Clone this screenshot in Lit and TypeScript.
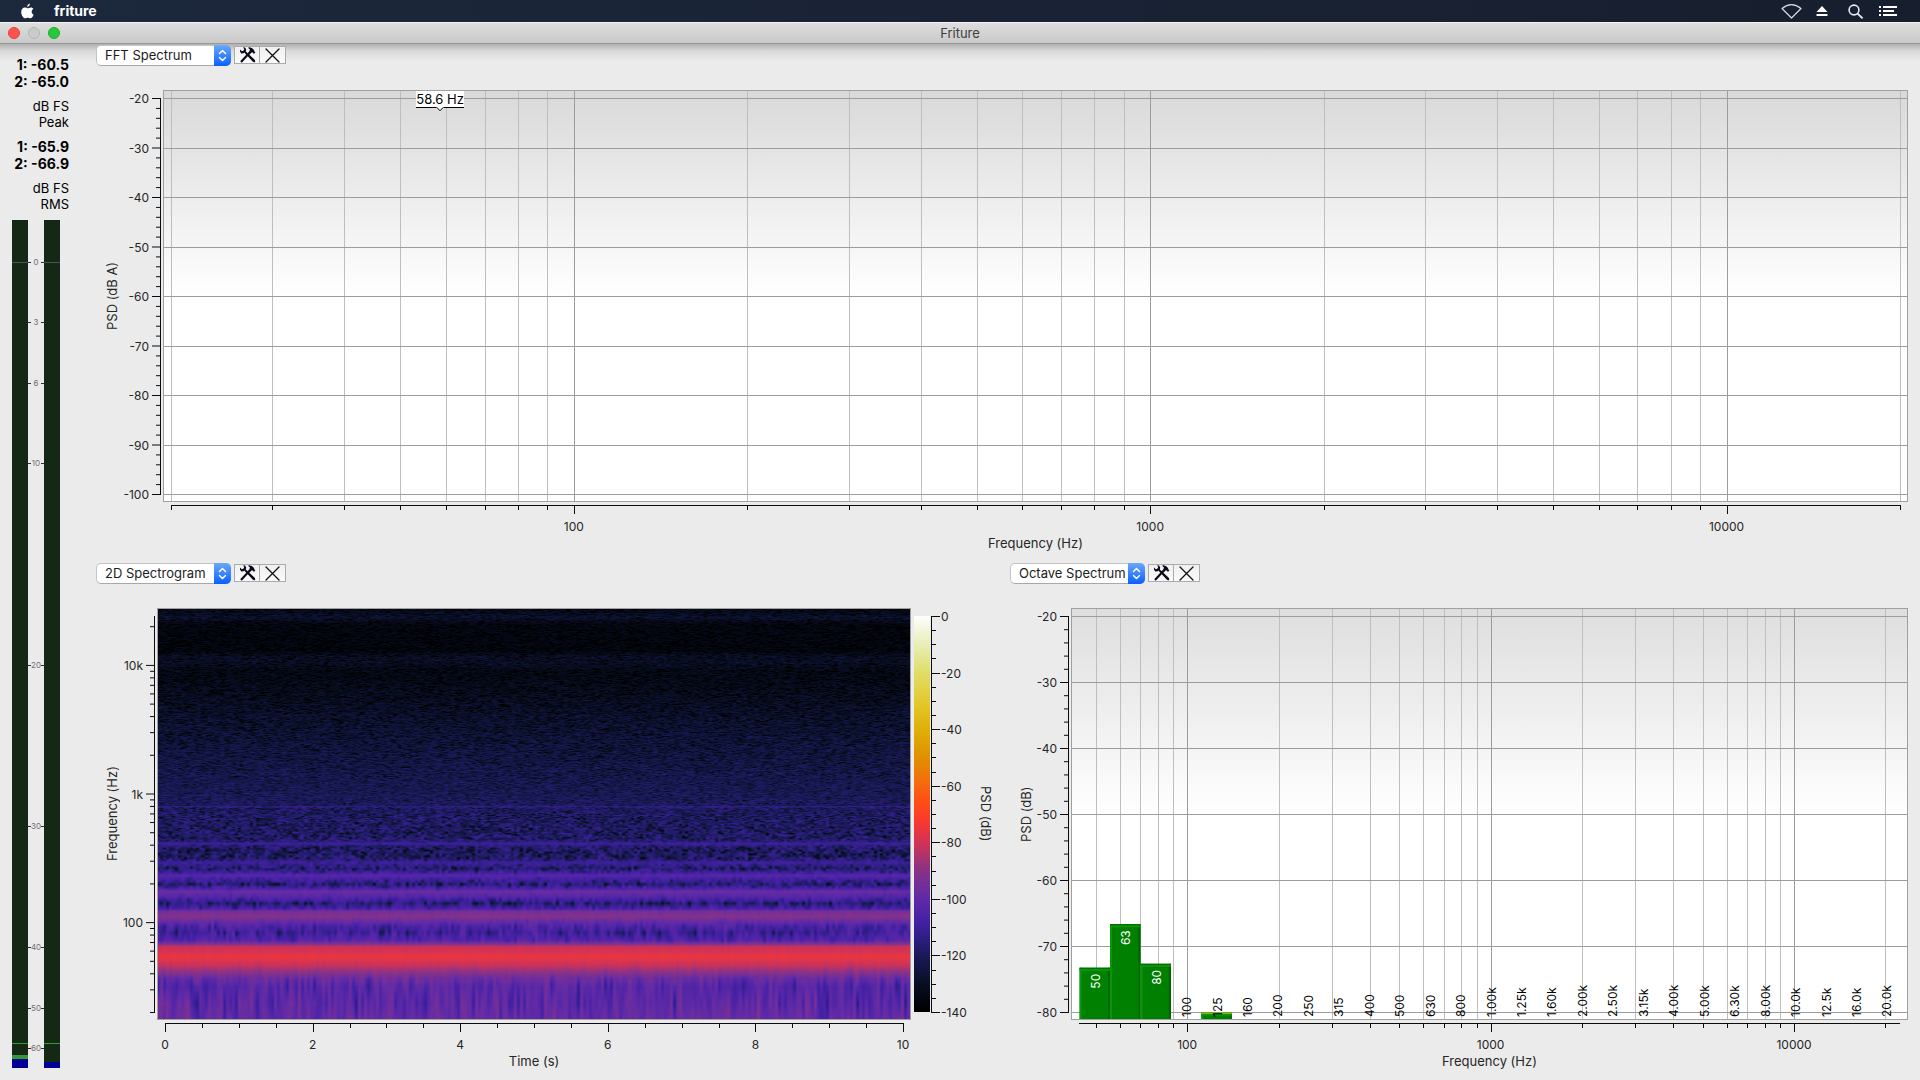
import { LitElement, html, svg, css, nothing } from "lit";
import { customElement, property } from "lit/decorators.js";

/* ---------- scales ---------- */

interface Tick {
  /** position along the axis, 0..1 */
  at: number;
  major: boolean;
  label?: string;
}

const pct = (v: number) => `${(v * 100).toFixed(3)}%`;

function logPos(f: number, lo: number, hi: number) {
  return Math.log10(f / lo) / Math.log10(hi / lo);
}

function logTicks(lo: number, hi: number, name: (f: number) => string): Tick[] {
  const out: Tick[] = [];
  for (let d = 10; d <= hi; d *= 10) {
    for (let m = 1; m < 10; m++) {
      const f = d * m;
      if (f < lo || f > hi) continue;
      out.push({
        at: logPos(f, lo, hi),
        major: m === 1,
        label: m === 1 ? name(f) : undefined,
      });
    }
  }
  return out;
}

function linearTicks(from: number, to: number, step: number, every: number): Tick[] {
  const n = Math.round(Math.abs(to - from) / step);
  const dir = Math.sign(to - from);
  return Array.from({ length: n + 1 }, (_, i) => {
    const major = i % every === 0;
    return {
      at: i / n,
      major,
      label: major ? String(from + dir * i * step) : undefined,
    };
  });
}

const flip = (ticks: Tick[]) => ticks.map((t) => ({ ...t, at: 1 - t.at }));

/* ---------- colour map of the spectrogram ---------- */

const COLOUR_STOPS: [number, [number, number, number]][] = [
  [0, [254, 254, 254]],
  [-10, [233, 238, 184]],
  [-20, [225, 221, 104]],
  [-30, [227, 202, 48]],
  [-40, [222, 176, 8]],
  [-50, [224, 144, 0]],
  [-58, [242, 112, 12]],
  [-65, [255, 80, 20]],
  [-72, [252, 58, 46]],
  [-80, [212, 50, 84]],
  [-90, [136, 50, 136]],
  [-100, [96, 42, 166]],
  [-108, [68, 32, 164]],
  [-114, [46, 30, 130]],
  [-120, [26, 26, 88]],
  [-130, [8, 14, 34]],
  [-140, [0, 0, 0]],
];

function colourOf(db: number): [number, number, number] {
  const v = Math.max(-139.99, Math.min(0, db));
  for (let i = 1; i < COLOUR_STOPS.length; i++) {
    const [b, cb] = COLOUR_STOPS[i];
    if (v >= b) {
      const [a, ca] = COLOUR_STOPS[i - 1];
      const k = (a - v) / (a - b);
      return [0, 1, 2].map((c) => ca[c] + (cb[c] - ca[c]) * k) as [number, number, number];
    }
  }
  return [0, 0, 0];
}

const COLOUR_BAR = `linear-gradient(${COLOUR_STOPS.map(
  ([v, c]) => `rgb(${c.join(",")}) ${((-v / 140) * 100).toFixed(1)}%`
).join(",")})`;

/** Row of the image, mean level in dB, share of noise. */
const LEVELS: [number, number, number][] = [
  [0, -134, 0.7], [8, -129, 0.7], [15, -136, 0.6], [41, -137, 0.6], [47, -131, 0.7],
  [54, -131, 0.7], [62, -135, 0.7], [90, -132, 0.8], [111, -129, 0.8], [150, -125, 0.8],
  [180, -122, 0.8], [196, -120, 0.8], [197, -114, 0.4], [199, -120, 1], [216, -120, 1.2],
  [229, -120, 1.2], [232, -116, 0.7], [234, -110, 0.2], [237, -117, 0.9], [241, -120, 1.2],
  [249, -119, 1.2], [253, -110, 0.3], [259, -118, 1.2], [263, -110, 0.6], [266, -103, 0.15],
  [270, -109, 0.6], [275, -117, 1.2], [279, -107, 0.5], [282, -98, 0.15], [287, -103, 0.3],
  [294, -116, 1.1], [299, -108, 0.6], [302, -95, 0.15], [307, -91, 0.15], [311, -97, 0.25],
  [317, -106, 0.7], [323, -110, 1], [331, -104, 0.6], [335, -90, 0.15], [337, -82, 0.1],
  [348, -76, 0.06], [356, -82, 0.1], [363, -90, 0.25], [369, -98, 0.6], [377, -103, 1],
  [391, -102, 1], [410, -99, 1],
];

function levelAt(row: number): [number, number] {
  for (let i = 1; i < LEVELS.length; i++) {
    if (row <= LEVELS[i][0]) {
      const [r0, a0, n0] = LEVELS[i - 1];
      const [r1, a1, n1] = LEVELS[i];
      const k = (row - r0) / (r1 - r0);
      return [a0 + (a1 - a0) * k, n0 + (n1 - n0) * k];
    }
  }
  return [-99, 1];
}

/** Level of one noise cell around 0 dB, with the long lower tail of a noise power. */
function noiseCell(a: number, b: number) {
  let h = Math.imul(a + 374761, 668265263) ^ Math.imul(b + 91138, 2246822519);
  h = Math.imul(h ^ (h >>> 13), 1274126177);
  h = Math.imul(h ^ (h >>> 15), 2654435761);
  const u = ((h ^ (h >>> 16)) >>> 0) / 4294967296;
  return Math.max(-14, 10 * Math.log10(-Math.log(1 - u * 0.9999) + 1e-6) + 2.5);
}

/* ---------- shared text style ---------- */

const base = css`
  :host {
    font-family: Inter, "Liberation Sans", sans-serif;
    font-size: 13px;
    line-height: 16px;
    color: #262626;
  }
  * {
    box-sizing: border-box;
  }
  svg {
    display: block;
    overflow: visible;
  }
  text {
    font-family: Inter, "Liberation Sans", sans-serif;
    font-size: 12px;
    fill: #262626;
  }
`;

/* ---------- spectrogram image ---------- */

@customElement("spectrogram-image")
class SpectrogramImage extends LitElement {
  static styles = css`
    :host {
      display: block;
      height: 100%;
    }
    canvas {
      display: block;
      width: 100%;
      height: 100%;
    }
  `;

  firstUpdated() {
    const canvas = this.renderRoot.querySelector("canvas")!;
    const ctx = canvas.getContext("2d")!;
    const { width, height } = canvas;
    const image = ctx.createImageData(width, height);
    const binWidth = 48000 / 4096;
    const cell = 3;
    for (let y = 0; y < height; y++) {
      const f = 20 * Math.pow(1200, (height - 7 - y) / (height - 14));
      const bin = f / binWidth;
      const dense = y < 170;
      const b0 = dense ? 5000 + y : Math.floor(bin);
      const kb = dense ? 0 : bin - Math.floor(bin);
      const [mean, share] = levelAt(y);
      for (let x = 0; x < width; x++) {
        const t = x / cell + (dense ? (y * 0.37) % 1 : 0);
        const t0 = Math.floor(t);
        const kt = t - t0;
        const low = noiseCell(b0, t0) * (1 - kt) + noiseCell(b0, t0 + 1) * kt;
        const high = kb ? noiseCell(b0 + 1, t0) * (1 - kt) + noiseCell(b0 + 1, t0 + 1) * kt : low;
        const noise = low * (1 - kb) + high * kb;
        const [r, g, b] = colourOf(mean + noise * share);
        const i = (y * width + x) * 4;
        image.data[i] = r;
        image.data[i + 1] = g;
        image.data[i + 2] = b;
        image.data[i + 3] = 255;
      }
    }
    ctx.putImageData(image, 0, 0);
  }

  render() {
    return html`<canvas width="752" height="410" role="img" aria-label="2D Spectrogram"></canvas>`;
  }
}

/* ---------- plot with axes ---------- */

@customElement("axis-plot")
class AxisPlot extends LitElement {
  @property() xTitle = "";
  @property() yTitle = "";
  @property({ attribute: false }) xTicks: Tick[] = [];
  @property({ attribute: false }) yTicks: Tick[] = [];
  @property({ type: Boolean }) grid = false;
  @property({ type: Boolean }) wide = false;

  static styles = [
    base,
    css`
      :host {
        display: grid;
        grid-template-columns: 40px 25px minmax(0, 1fr) auto;
        grid-template-rows: minmax(0, 1fr) 33px 27px;
      }
      :host([wide]) {
        grid-template-columns: 40px 31px minmax(0, 1fr) auto;
      }
      .y-title {
        display: grid;
        place-items: center;
        writing-mode: vertical-rl;
        transform: rotate(180deg);
      }
      .y-axis {
        padding: 8px 0;
      }
      .y-axis svg,
      .x-axis svg {
        width: 100%;
        height: 100%;
      }
      .field {
        position: relative;
        overflow: hidden;
        border: 1px solid #a0a0a0;
        background: var(--field, none);
      }
      .layer {
        position: absolute;
        inset: 0;
      }
      .rows {
        inset: 7px 0;
      }
      .columns {
        inset: 0 7px;
      }
      .layer svg {
        width: 100%;
        height: 100%;
      }
      .x-axis {
        grid-column: 3;
        grid-row: 2;
        padding: 0 8px;
      }
      .x-title {
        grid-column: 3;
        grid-row: 3;
        text-align: center;
      }
      .side {
        grid-column: 4;
        grid-row: 1;
        display: flex;
      }
      .line {
        fill: #0c0c0c;
      }
      .minor {
        fill: #bebebe;
      }
      .major {
        fill: #9c9c9c;
      }
    `,
  ];

  render() {
    return html`
      <div class="y-title">${this.yTitle}</div>
      <div class="y-axis">
        <svg>
          <svg x="100%" overflow="visible"><rect class="line" x="-3" width="1" height="100%" /></svg>
          ${this.yTicks.map(
            (t) => svg`<svg x="100%" y=${pct(t.at)} overflow="visible">
              <rect class="line" x=${t.major ? -11 : -7} width=${t.major ? 9 : 5} height="1" />
              ${t.label ? svg`<text x="-14" y="5" text-anchor="end">${t.label}</text>` : nothing}
            </svg>`
          )}
        </svg>
      </div>
      <div class="field">
        ${this.grid
          ? html`<div class="layer columns">
                <svg shape-rendering="crispEdges">
                  ${this.xTicks.map(
                    (t) => svg`<rect class=${t.major ? "major" : "minor"} x=${pct(t.at)} width="1" height="100%" />`
                  )}
                </svg>
              </div>
              <div class="layer rows">
                <svg shape-rendering="crispEdges">
                  ${this.yTicks
                    .filter((t) => t.major)
                    .map((t) => svg`<rect class="major" y=${pct(t.at)} width="100%" height="1" />`)}
                </svg>
              </div>`
          : nothing}
        <slot></slot>
      </div>
      <div class="side"><slot name="side"></slot></div>
      <div class="x-axis">
        <svg>
          <rect class="line" y="3" width="100%" height="1" />
          ${this.xTicks.map(
            (t) => svg`<svg x=${pct(t.at)} overflow="visible">
              <rect class="line" y="3" width="1" height=${t.major ? 9 : 5} shape-rendering="crispEdges" />
              ${t.label ? svg`<text y="29" text-anchor="middle">${t.label}</text>` : nothing}
            </svg>`
          )}
        </svg>
      </div>
      <div class="x-title">${this.xTitle}</div>
    `;
  }
}

/* ---------- colour scale ---------- */

@customElement("colour-scale")
class ColourScale extends LitElement {
  static styles = [
    base,
    css`
      :host {
        display: flex;
        padding: 8px 10px 8px 3px;
      }
      .bar {
        width: 16px;
      }
      .scale {
        width: 46px;
      }
      .scale svg {
        width: 100%;
        height: 100%;
      }
      .title {
        width: 20px;
        display: grid;
        place-items: center;
        writing-mode: vertical-rl;
      }
      .line {
        fill: #0c0c0c;
      }
    `,
  ];

  render() {
    return html`
      <div class="bar" style="background:${COLOUR_BAR}"></div>
      <div class="scale">
        <svg>
          <rect class="line" x="1" width="1" height="100%" />
          ${linearTicks(0, -140, 5, 4).map(
            (t) => svg`<svg y=${pct(t.at)} overflow="visible">
              <rect class="line" x="1" width=${t.major ? 9 : 5} height="1" shape-rendering="crispEdges" />
              ${t.label ? svg`<text x="11" y="5">${t.label}</text>` : nothing}
            </svg>`
          )}
        </svg>
      </div>
      <div class="title">PSD (dB)</div>
    `;
  }
}

/* ---------- octave bars ---------- */

const OCT_LO = 44;
const OCT_HI = 22350;
const BANDS = [
  "50", "63", "80", "100", "125", "160", "200", "250", "315", "400", "500", "630", "800", "1.00k",
  "1.25k", "1.60k", "2.00k", "2.50k", "3.15k", "4.00k", "5.00k", "6.30k", "8.00k", "10.0k", "12.5k",
  "16.0k", "20.0k",
];
const BAND_LEVELS: Record<string, number> = { "50": -73.3, "63": -66.7, "80": -72.7, "125": -80.1 };

@customElement("octave-bars")
class OctaveBars extends LitElement {
  static styles = [
    base,
    css`
      :host {
        position: absolute;
        inset: 7px;
      }
      .plot {
        width: 100%;
        height: 100%;
      }
      .name {
        fill: #000;
      }
      .inside {
        fill: #fff;
      }
      .face {
        fill: #008000;
      }
      .light {
        fill: #0a960a;
      }
      .dark {
        fill: #006400;
      }
      .hold {
        fill: #c8c800;
      }
    `,
  ];

  render() {
    const span = Math.log10(OCT_HI / OCT_LO);
    const width = Math.log10(2) / 3 / span;
    return html`<svg class="plot">
      ${BANDS.map((name, i) => {
        const centre = logPos(1000 * Math.pow(2, (i - 13) / 3), OCT_LO, OCT_HI);
        const level = BAND_LEVELS[name];
        const top = level === undefined ? 1 : (-20 - level) / 60;
        const tall = level !== undefined && level > -79;
        return svg`
          ${level === undefined
            ? nothing
            : svg`<svg x=${pct(centre - width / 2)} y=${pct(top)} width=${pct(width)} height="100%" overflow="hidden">
                <rect class="face" width="100%" height="100%" />
                <rect class="light" width="2" height="100%" />
                <svg x="100%" overflow="visible"><rect class="dark" x="-2" width="2" height="100%" /></svg>
                <rect class="light" width="100%" height="3" />
                <rect class=${tall ? "dark" : "hold"} width="100%" height="1" />
              </svg>`}
          <svg x=${pct(centre)} y=${tall ? pct(top) : "100%"} overflow="visible">
            <text class=${tall ? "inside" : "name"} transform="rotate(-90)"
              x=${tall ? -6 : -5} y="5" text-anchor=${tall ? "end" : "start"}>${name}</text>
          </svg>`;
      })}
    </svg>`;
  }
}

/* ---------- dock: toolbar over a plot ---------- */

const KINDS = ["FFT Spectrum", "2D Spectrogram", "Octave Spectrum"];

@customElement("plot-dock")
class PlotDock extends LitElement {
  @property() kind = "";

  static styles = [
    base,
    css`
      :host {
        display: flex;
        flex-direction: column;
        min-width: 0;
      }
      .toolbar {
        display: flex;
        align-items: flex-start;
        gap: 3px;
        height: 46px;
        padding: 1px 4px;
      }
      .picker {
        position: relative;
        display: flex;
        width: 135px;
        height: 21px;
      }
      select {
        appearance: none;
        width: 100%;
        padding: 0 0 2px 8px;
        border: 1px solid #c4c4c4;
        border-bottom-color: #a8a8a8;
        border-radius: 5px;
        background: #fff;
        color: #1c1c1c;
        font: inherit;
      }
      .chevrons {
        position: absolute;
        inset: 0 0 0 auto;
        width: 17px;
        border-radius: 0 5px 5px 0;
        background: linear-gradient(#6aa8fa, #0a60fe);
        pointer-events: none;
      }
      .tools {
        display: flex;
        padding-top: 1px;
      }
      button {
        display: grid;
        place-items: center;
        width: 26px;
        height: 18px;
        padding: 0;
        border: 1px solid #ababab;
        background: linear-gradient(#f0f0f0, #fafafa);
      }
      button + button {
        border-left: 0;
      }
      .body {
        flex: 1;
        display: grid;
      }
    `,
  ];

  render() {
    return html`
      <div class="toolbar">
        <div class="picker">
          <select aria-label="Plot type">
            ${KINDS.map((k) => html`<option ?selected=${k === this.kind}>${k}</option>`)}
          </select>
          <span class="chevrons">
            <svg width="17" height="21" fill="none" stroke="#fff" stroke-width="1.5" stroke-linecap="round" stroke-linejoin="round">
              <path d="M5.5 8.5 8.5 5.5 11.5 8.5M5.5 12.5 8.5 15.5 11.5 12.5" />
            </svg>
          </span>
        </div>
        <div class="tools">
          <button aria-label="Settings">
            <svg width="17" height="16" viewBox="0 0 17 16">
              <path
                d="M1 4.6 2.2 6.6 4.6 6.2 5.3 5.5 13.6 14.6 15.4 15.4 16.4 14.2 15.5 12.6 6.8 4.6 7.2 2.6 6 .6 4.2.2 5.2 2.2 4.4 3.8 2.8 4.2 1 2.6Z"
                fill="#0a0a18" />
              <path
                d="M1.2 14.2 2.8 15.8 9.2 8.8 11.2 6.9 12.6 5.6 14 5.4 14.8 7 16.4 5.6 15.4 4.4 15 3 13.2 1.2 10.6.2 9 .8 11 2.4 10.4 4.2 8.6 6.2Z"
                fill="#0a0a18" />
            </svg>
          </button>
          <button aria-label="Close">
            <svg width="15" height="15" fill="none" stroke="#101010" stroke-width="1.3" stroke-linecap="round">
              <path d="M1 1 14 14M14 1 1 14" />
            </svg>
          </button>
        </div>
      </div>
      <div class="body"><slot></slot></div>
    `;
  }
}

/* ---------- level meters ---------- */

/** IEC 268 deflection in percent; 0 dB is 100. */
function iec(db: number) {
  if (db < -60) return (db + 70) * 0.25;
  if (db < -50) return (db + 60) * 0.5 + 2.5;
  if (db < -40) return (db + 50) * 0.75 + 7.5;
  if (db < -30) return (db + 40) * 1.5 + 15;
  if (db < -20) return (db + 30) * 2 + 30;
  return (db + 20) * 2.5 + 50;
}

@customElement("level-meters")
class LevelMeters extends LitElement {
  static styles = [
    base,
    css`
      :host {
        display: flex;
        flex-direction: column;
        padding: 12px 0 12px 12px;
        color: #000;
      }
      .readings {
        display: flex;
        flex-direction: column;
        gap: 8px;
        width: 57px;
        padding-bottom: 8px;
        text-align: right;
      }
      .values {
        font-size: 14px;
        line-height: 17px;
        font-weight: 700;
      }
      .meters {
        flex: 1;
        width: 48px;
      }
      .meters svg {
        width: 100%;
        height: 100%;
      }
      .trough {
        fill: #152815;
      }
      .zero {
        fill: #4a5a4a;
      }
      .mark {
        fill: #303030;
      }
      .peak {
        fill: #339933;
      }
      .rms {
        fill: #000096;
      }
      .scale {
        font-size: 8px;
        fill: #707070;
      }
    `,
  ];

  render() {
    const full = 105.2;
    const y = (level: number) => pct((full - level) / full);
    const channels = [
      { x: 0, peak: 1.6, rms: 1.1 },
      { x: 32, peak: 0.7, rms: 0.7 },
    ];
    return html`
      <div class="readings">
        <div class="values">1: -60.5<br />2: -65.0</div>
        <div>dB FS<br />Peak</div>
        <div class="values">1: -65.9<br />2: -66.9</div>
        <div>dB FS<br />RMS</div>
      </div>
      <div class="meters">
        <svg shape-rendering="crispEdges">
          ${channels.map(
            (c) => svg`
              <rect class="trough" x=${c.x} width="16" height="100%" />
              <rect class="zero" x=${c.x} y=${y(100)} width="16" height="1" />
              <rect class="peak" x=${c.x} y=${y(3.1)} width="16" height="1" />
              <rect class="peak" x=${c.x} y=${y(c.peak)} width="16" height=${pct(c.peak / full)} />
              <rect class="rms" x=${c.x} y=${y(c.rms)} width="16" height=${pct(c.rms / full)} />`
          )}
          ${[0, 3, 6, 10, 20, 30, 40, 50, 60].map(
            (v) => svg`<svg y=${y(iec(-v))} overflow="visible">
              <rect class="mark" x="16" width="3" height="1" />
              <rect class="mark" x="29" width="3" height="1" />
              <text class="scale" x="24" y="3" text-anchor="middle">${v}</text>
            </svg>`
          )}
        </svg>
      </div>
    `;
  }
}

/* ---------- window ---------- */

@customElement("app-root")
class AppRoot extends LitElement {
  static styles = [
    base,
    css`
      :host {
        display: flex;
        flex-direction: column;
        min-height: 100vh;
        background: #ebebeb;
      }
      button {
        padding: 0;
        border: 0;
        background: none;
        color: inherit;
        font: inherit;
      }
      .menu-bar {
        display: flex;
        align-items: center;
        height: 22px;
        padding: 0 22px 0 20px;
        background: linear-gradient(90deg, #1c283c, #171e2e);
        color: #fff;
      }
      .app-name {
        margin-left: 19px;
        font-size: 14px;
        font-weight: 700;
      }
      .status {
        display: flex;
        align-items: center;
        gap: 14px;
        margin-left: auto;
      }
      .title-bar {
        display: grid;
        grid-template-columns: 1fr auto 1fr;
        align-items: center;
        height: 22px;
        padding: 0 8px;
        border-top: 1px solid #f4f4f4;
        border-bottom: 1px solid #979797;
        background: linear-gradient(#dedede, #c9c9c9);
        color: #404040;
      }
      .lights {
        display: flex;
        gap: 8px;
      }
      .light {
        width: 12px;
        height: 12px;
        border-radius: 50%;
        border: 1px solid #b4b4b4;
        background: #cbcbcb;
      }
      .close {
        border-color: #e2443f;
        background: #fe5250;
      }
      .zoom {
        border-color: #1dad2b;
        background: #28c83c;
      }
      .content {
        flex: 1;
        display: grid;
        grid-template-columns: 92px minmax(0, 1fr);
        background: linear-gradient(rgba(0, 0, 0, 0.25), rgba(0, 0, 0, 0.08) 7px, transparent 17px);
      }
      .docks {
        display: grid;
        grid-template-columns: repeat(2, minmax(0, 1fr));
        grid-template-rows: repeat(2, minmax(0, 1fr));
      }
      .across {
        grid-column: 1 / -1;
      }
      .spectrum {
        --field: linear-gradient(#d9d9d9, #fff 50%);
        padding-right: 12px;
      }
      .octave {
        --field: linear-gradient(#dedede, #fff 50%);
        padding-right: 12px;
      }
      .marker {
        position: absolute;
        inset: 0 7px;
      }
      .flag {
        position: absolute;
        top: 0;
        width: 48px;
        height: 17px;
        margin-left: -24px;
        border-bottom: 1px solid #000;
        background: #fff;
        color: #000;
        line-height: 16px;
        text-align: center;
        white-space: nowrap;
      }
      .notch {
        position: absolute;
        top: 15px;
        left: 20px;
      }
    `,
  ];

  render() {
    const peak = 58.6;
    return html`
      <header class="menu-bar">
        <button aria-label="Apple menu">
          <svg width="15" height="16" viewBox="0 0 15 16" fill="#fff">
            <path d="M9.9.6C9.9 2.4 8.7 4 7.2 4 7 2.3 8.4.8 9.9.6Z" />
            <path d="M13.6 11.8C12.8 13.8 11.6 15.3 10.4 15.3 9.3 15.3 9 14.7 7.8 14.7S6.2 15.3 5.2 15.3C3.4 15.3 1.2 12 1.2 8.9 1.2 6.2 2.9 4.5 4.8 4.5 6 4.5 6.8 5.2 7.7 5.2S9.4 4.4 10.8 4.4C12 4.4 12.9 5 13.4 5.8 10.9 7.3 11.3 10.7 13.6 11.8Z" />
          </svg>
        </button>
        <button class="app-name">friture</button>
        <div class="status">
          <button aria-label="Wi-Fi">
            <svg width="21" height="16" fill="none" stroke="#d6dae4" stroke-width="1.2" stroke-linejoin="round">
              <path d="M1 5.5Q10.5-2.2 20 5.5L10.5 15Z" />
            </svg>
          </button>
          <button aria-label="Eject">
            <svg width="12" height="16" fill="#fff">
              <path d="M6 3 11.5 9H.5Z" />
              <rect x=".5" y="11" width="11" height="2" />
            </svg>
          </button>
          <button aria-label="Search">
            <svg width="23" height="16" fill="none" stroke="#e4e8f0" stroke-width="1.6">
              <circle cx="12" cy="7" r="4.9" />
              <path d="M15.6 10.6 20.6 15.4" stroke-width="2" />
            </svg>
          </button>
          <button aria-label="Notification Center">
            <svg width="19" height="16" fill="#fff">
              <path d="M0 3h2v2H0zM0 7h2v2H0zM0 11h2v2H0zM4 3h14v2H4zM4 7h11v2H4zM4 11h14v2H4z" />
            </svg>
          </button>
        </div>
      </header>
      <div class="title-bar">
        <div class="lights">
          <button class="light close" aria-label="Close window"></button>
          <button class="light" aria-label="Minimise"></button>
          <button class="light zoom" aria-label="Zoom"></button>
        </div>
        <div>Friture</div>
      </div>
      <main class="content">
        <level-meters></level-meters>
        <div class="docks">
          <plot-dock class="across" kind="FFT Spectrum">
            <axis-plot
              class="spectrum"
              grid
              wide
              xTitle="Frequency (Hz)"
              yTitle="PSD (dB A)"
              .xTicks=${logTicks(20, 20000, String)}
              .yTicks=${linearTicks(-20, -100, 2, 5)}
            >
              <div class="marker">
                <div class="flag" style="left:${pct(logPos(peak, 20, 20000))}">
                  ${peak} Hz
                  <svg class="notch" width="8" height="6">
                    <path d="M0 0H8V1.5H7L4 5 1 1.5H0Z" fill="#fff" />
                    <path d="M1 1.5 4 4.8 7 1.5" fill="none" stroke="#000" />
                  </svg>
                </div>
              </div>
            </axis-plot>
          </plot-dock>
          <plot-dock kind="2D Spectrogram">
            <axis-plot
              xTitle="Time (s)"
              yTitle="Frequency (Hz)"
              .xTicks=${linearTicks(0, 10, 0.5, 4)}
              .yTicks=${flip(logTicks(20, 24000, (f) => (f < 1000 ? String(f) : `${f / 1000}k`)))}
            >
              <spectrogram-image></spectrogram-image>
              <colour-scale slot="side"></colour-scale>
            </axis-plot>
          </plot-dock>
          <plot-dock kind="Octave Spectrum">
            <axis-plot
              class="octave"
              grid
              xTitle="Frequency (Hz)"
              yTitle="PSD (dB)"
              .xTicks=${logTicks(OCT_LO, OCT_HI, String)}
              .yTicks=${linearTicks(-20, -80, 2, 5)}
            >
              <octave-bars></octave-bars>
            </axis-plot>
          </plot-dock>
        </div>
      </main>
    `;
  }
}
